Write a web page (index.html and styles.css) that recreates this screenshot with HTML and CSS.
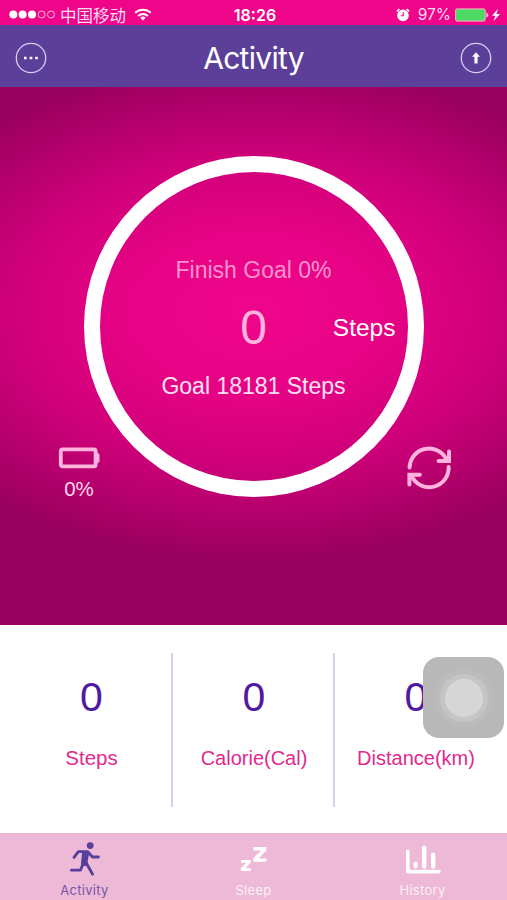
FILE: index.html
```html
<!DOCTYPE html>
<html>
<head>
    <meta charset="utf-8">
    <title>Activity</title>
    <link rel="stylesheet" href="styles.css">
</head>
<body>
    <div class="status-bar">
        <div class="status-left">
            <svg width="47" height="9" viewBox="0 0 47 9">
                <g fill="#fff">
                    <circle cx="4.3" cy="4.5" r="4"/>
                    <circle cx="13.6" cy="4.5" r="4"/>
                    <circle cx="23" cy="4.5" r="4"/>
                </g>
                <g fill="none" stroke="#ffb5de">
                    <circle cx="32.6" cy="4.5" r="3.5"/>
                    <circle cx="42" cy="4.5" r="3.5"/>
                </g>
            </svg>
            <span class="carrier">中国移动</span>
            <svg class="wifi" width="18" height="13" viewBox="0 0 18 13">
                <g fill="none" stroke="#fff" stroke-width="2">
                    <path d="M1.2 4.8a11.2 11.2 0 0 1 15.6 0"/>
                    <path d="M4.2 8a7 7 0 0 1 9.6 0"/>
                </g>
                <path d="M9 12.5L6.3 9.8a3.8 3.8 0 0 1 5.4 0z" fill="#fff"/>
            </svg>
        </div>
        <span class="clock">18:26</span>
        <div class="status-right">
            <svg width="14" height="14" viewBox="0 0 14 14">
                <circle cx="7" cy="7.4" r="5.8" fill="#fff"/>
                <path d="M.8 3.4L3.4 1M13.2 3.4L10.6 1" stroke="#fff" stroke-width="1.6"/>
                <path d="M7.2 4.2V7.8H4.8" fill="none" stroke="#ee058a" stroke-width="1.1"/>
            </svg>
            <span class="percent">97%</span>
            <svg width="46" height="14" viewBox="0 0 46 14">
                <rect x=".6" y=".9" width="29.6" height="12.2" rx="1.5" fill="#4cd964" stroke="#ffb5c8"/>
                <path d="M31.4 4.6q2 .6 2 2.4t-2 2.4z" fill="#ffd0e8"/>
                <path d="M43 .8L37 7.8h3.4l-1.9 5.4L45 6h-3.6z" fill="#fff"/>
            </svg>
        </div>
    </div>

    <div class="header">
        <svg width="32" height="32" viewBox="0 0 32 32">
            <circle cx="16" cy="16" r="14.7" fill="none" stroke="#dccdf5" stroke-width="1.3"/>
            <path d="M9 14.7h2.6v2.6H9zM14.7 14.7h2.6v2.6h-2.6zM20.2 14.7h2.6v2.6h-2.6z" fill="#fff"/>
        </svg>
        <h1>Activity</h1>
        <svg width="32" height="32" viewBox="0 0 32 32">
            <circle cx="16" cy="16" r="14.7" fill="none" stroke="#dccdf5" stroke-width="1.3"/>
            <path d="M16 10.2l4 4.6h-2.4v6.8h-3.2v-6.8H12z" fill="#fff"/>
        </svg>
    </div>

    <div class="hero">
        <div class="ring">
            <p class="finish">Finish Goal 0%</p>
            <div class="count">
                <span class="count-value">0</span>
                <span class="count-unit">Steps</span>
            </div>
            <p class="goal">Goal 18181 Steps</p>
        </div>
        <div class="device">
            <div class="battery">
                <svg width="42" height="22" viewBox="0 0 42 22">
                    <rect x="2.8" y="2.4" width="34.8" height="17" rx="1.6" fill="none" stroke="#ffb3dd" stroke-width="3.8"/>
                    <path d="M38.5 5.6h1.2l1.8 2.2v6.4l-1.8 2.2h-1.2z" fill="#ffb3dd"/>
                </svg>
                <span>0%</span>
            </div>
            <svg class="sync" width="46" height="44" viewBox="0 0 46 44">
                <g fill="none" stroke="#ffb3dd" stroke-width="4" stroke-linecap="round">
                    <path d="M3.6 21.4A19.4 19.4 0 0 1 40.4 13.4"/>
                    <path d="M42.6 21A19.4 19.4 0 0 1 5.8 30.4"/>
                    <path d="M43 5.6V15H32.6"/>
                    <path d="M3.4 38.4V28.8H13.8"/>
                </g>
            </svg>
        </div>
    </div>

    <div class="stats">
        <div class="stat">
            <span class="value">0</span>
            <span class="label wide">Steps</span>
        </div>
        <div class="stat">
            <span class="value">0</span>
            <span class="label">Calorie(Cal)</span>
        </div>
        <div class="stat">
            <span class="value">0</span>
            <span class="label">Distance(km)</span>
        </div>
        <!-- floating assistive button -->
        <div class="assist">
            <div class="assist-dot"></div>
        </div>
    </div>

    <div class="tabs">
        <div class="tab active">
            <svg width="32" height="36" viewBox="0 0 32 36">
                <circle cx="21.2" cy="4.6" r="3.4" fill="currentColor"/>
                <g fill="none" stroke="currentColor" stroke-width="2.8" stroke-linecap="round" stroke-linejoin="round">
                    <path d="M5 16.4L9.4 10.6H18.8L23.4 16H29.5"/>
                    <path d="M2.4 29.2H11.4L14.4 22"/>
                    <path d="M17 21.5L23.6 33.2"/>
                </g>
                <path d="M13.2 10L20.4 11.2 18.6 20.4 19.2 24.4 12.4 25.4 12 22.6z" fill="currentColor"/>
            </svg>
            <span>Activity</span>
        </div>
        <div class="tab">
            <svg width="32" height="36" viewBox="0 0 32 36">
                <path d="M15.4 6H28.4V9.4L20.6 17.4H28.4V20.8H15.2V17.4L23 9.4H15.4z" fill="currentColor"/>
                <path d="M3 19H12.8V21.6L7.4 27.2H12.8V30H2.8V27.2L8.2 21.8H3z" fill="currentColor"/>
            </svg>
            <span>Sleep</span>
        </div>
        <div class="tab">
            <svg width="36" height="36" viewBox="0 0 36 36">
                <g fill="none" stroke="currentColor" stroke-linecap="round">
                    <path d="M2.8 10.4V30.6H34" stroke-width="3.6" stroke-linejoin="round"/>
                    <path d="M10.6 22.4V25.6" stroke-width="4"/>
                    <path d="M19.2 6.6V25.6M28.2 13.8V25.6" stroke-width="4.4"/>
                </g>
            </svg>
            <span>History</span>
        </div>
    </div>
</body>
</html>
```

FILE: styles.css
```css
body {
    margin: 0;
    height: 900px;
    display: flex;
    flex-direction: column;
    font-family: "Liberation Sans", "Noto Sans CJK SC", Arial, sans-serif;
    background-color: #fff;
    overflow: hidden;
}
h1, p {
    margin: 0;
    font-weight: normal;
}
svg {
    display: block;
    flex: none;
}
.status-bar {
    height: 25px;
    box-sizing: border-box;
    padding: 4px 6px 0 9px;
    display: grid;
    grid-template-columns: 1fr auto 1fr;
    align-items: center;
    background-color: #ee058a;
    color: #fff;
    font-family: Inter, "Noto Sans CJK SC", sans-serif;
    font-size: 16px;
    line-height: 20px;
}
.status-left, .status-right {
    display: flex;
    align-items: center;
}
.carrier {
    margin-left: 4px;
    font-family: "Noto Sans CJK SC", sans-serif;
    font-size: 16.5px;
    font-weight: 400;
    color: #ffdcef;
}
.wifi {
    margin-left: 8px;
    margin-top: -1px;
}
.clock {
    font-weight: 600;
}
.status-right {
    justify-content: flex-end;
}
.status-right svg:first-child {
    margin-right: 8px;
}
.percent {
    margin-right: 4px;
    font-size: 15.5px;
    color: #ffdcef;
}
.header {
    height: 62px;
    box-sizing: border-box;
    padding: 3px 15px 0;
    display: flex;
    align-items: center;
    justify-content: space-between;
    background-color: #5b3f99;
    color: #fff;
}
.header h1 {
    font-family: Inter, sans-serif;
    font-size: 30px;
    letter-spacing: -0.7px;
}
.hero {
    height: 538px;
    box-sizing: border-box;
    padding-top: 69px;
    display: grid;
    grid-template-columns: 1fr;
    grid-template-rows: 341px;
    background: radial-gradient(ellipse 400px 250px at 50% 225px, #ee058b 0%, #e80386 30%, #d0007a 60%, #ae0069 85%, #97005d 100%);
    color: #fff;
}
.ring, .device {
    grid-row: 1;
    grid-column: 1;
}
.ring {
    width: 340px;
    height: 341px;
    box-sizing: border-box;
    border: 16px solid #fff;
    border-radius: 50%;
    justify-self: center;
    padding-top: 84px;
    display: flex;
    flex-direction: column;
    align-items: center;
    font-size: 23px;
    line-height: 28px;
}
.finish {
    color: #ff92ce;
}
.count {
    width: 100%;
    height: 88px;
    display: grid;
    grid-template-columns: 1fr auto 1fr;
    align-items: center;
}
.count-value {
    grid-column: 2;
    font-size: 48px;
    color: #ffb3dd;
}
.count-unit {
    justify-self: end;
    margin-right: 12px;
    font-size: 24.5px;
}
.goal {
    color: #ffe3f3;
}
.device {
    align-self: end;
    display: flex;
    justify-content: space-between;
    align-items: flex-start;
    padding: 0 55px 0 58px;
    height: 51px;
}
.battery {
    display: flex;
    flex-direction: column;
    align-items: center;
    padding-top: 1px;
    font-size: 20.5px;
    line-height: 22px;
    color: #ffd6ec;
}
.battery span {
    margin-top: 9px;
}
.stats {
    position: relative;
    height: 208px;
    box-sizing: border-box;
    padding: 28px 0 26px 10px;
    display: grid;
    grid-template-columns: 163px 162px 162px;
}
.stat {
    display: flex;
    flex-direction: column;
    align-items: center;
    padding: 20px 0 0 2px;
    border-right: 2px solid #d5d0e6;
}
.stat:nth-child(3) {
    border-right: none;
    padding-left: 0;
}
.value {
    font-size: 41px;
    line-height: 48px;
    color: #4f1aa0;
}
.label {
    margin-top: 25px;
    font-size: 20px;
    line-height: 24px;
    color: #e02a8e;
}
.wide {
    font-size: 20.5px;
}
.assist {
    position: absolute;
    left: 423px;
    top: 32px;
    width: 81px;
    height: 81px;
    border-radius: 16px;
    background-color: #b8b8b8;
    display: flex;
    align-items: center;
    justify-content: center;
}
.assist-dot {
    width: 38px;
    height: 38px;
    border-radius: 50%;
    background-color: #d6d6d6;
    box-shadow: 0 0 0 5px #c5c5c5, 0 0 0 10px #bcbcbc;
}
.tabs {
    height: 67px;
    box-sizing: border-box;
    display: grid;
    grid-template-columns: repeat(3, 1fr);
    background-color: #edb9d7;
    border-top: 1px solid #e0b5cd;
}
.tab {
    display: flex;
    flex-direction: column;
    align-items: center;
    padding-top: 7px;
    font-family: Inter, sans-serif;
    font-size: 13px;
    line-height: 16px;
    color: #fff;
}
.tab span {
    margin-top: 5px;
    letter-spacing: 0.3px;
    opacity: 0.8;
}
.active {
    color: #583f9b;
}
```
